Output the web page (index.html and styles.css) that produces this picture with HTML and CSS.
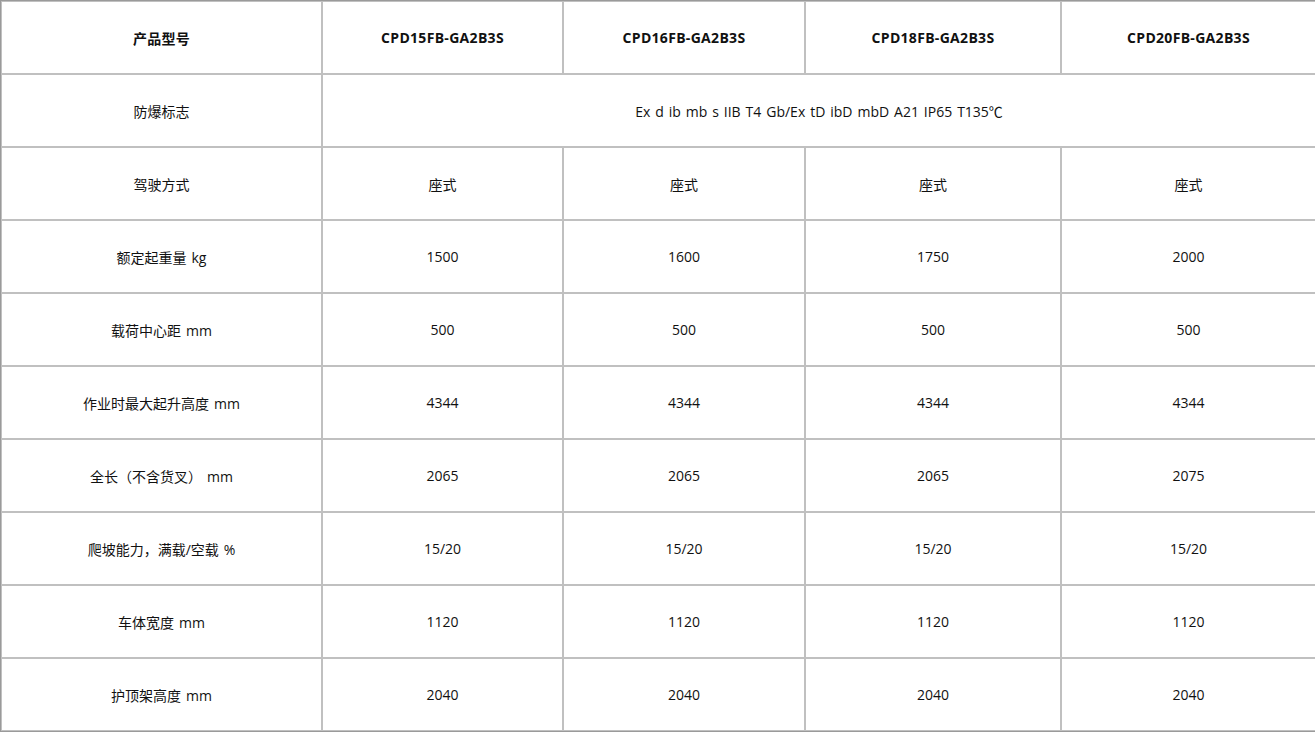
FILE: index.html
```html
<!DOCTYPE html>
<html lang="zh">
<head>
<meta charset="utf-8">
<link rel="stylesheet" href="styles.css">
</head>
<body>
<table class="spec">
  <colgroup>
    <col class="c1"><col class="c2"><col class="c3"><col class="c4"><col class="c5">
  </colgroup>
  <tr class="head">
    <td>产品型号</td><td>CPD15FB-GA2B3S</td><td>CPD16FB-GA2B3S</td><td>CPD18FB-GA2B3S</td><td>CPD20FB-GA2B3S</td>
  </tr>
  <tr>
    <td>防爆标志</td><td colspan="4">Ex d ib mb s IIB T4 Gb/Ex tD ibD mbD A21 IP65 T135℃</td>
  </tr>
  <tr>
    <td>驾驶方式</td><td>座式</td><td>座式</td><td>座式</td><td>座式</td>
  </tr>
  <tr>
    <td>额定起重量 kg</td><td>1500</td><td>1600</td><td>1750</td><td>2000</td>
  </tr>
  <tr>
    <td>载荷中心距 mm</td><td>500</td><td>500</td><td>500</td><td>500</td>
  </tr>
  <tr>
    <td>作业时最大起升高度 mm</td><td>4344</td><td>4344</td><td>4344</td><td>4344</td>
  </tr>
  <tr>
    <td>全长（不含货叉） mm</td><td>2065</td><td>2065</td><td>2065</td><td>2075</td>
  </tr>
  <tr>
    <td>爬坡能力，满载/空载 %</td><td>15/20</td><td>15/20</td><td>15/20</td><td>15/20</td>
  </tr>
  <tr>
    <td>车体宽度 mm</td><td>1120</td><td>1120</td><td>1120</td><td>1120</td>
  </tr>
  <tr>
    <td>护顶架高度 mm</td><td>2040</td><td>2040</td><td>2040</td><td>2040</td>
  </tr>
</table>
</body>
</html>
```
FILE: styles.css
```css
html, body {
  margin: 0;
  padding: 0;
  background: #fff;
}
.spec {
  width: 1315px;
  table-layout: fixed;
  border-collapse: separate;
  border-spacing: 0;
  border: 1px solid #9a9a9a;
  font-family: "Open Sans", "Noto Sans CJK SC", sans-serif;
  font-size: 14px;
  color: #111;
}
.c1 { width: 321px; }
.c2 { width: 241px; }
.c3 { width: 242px; }
.c4 { width: 256px; }
.c5 { width: 255px; }
.spec tr {
  height: 73px;
}
.spec td {
  border: 1px solid #c0c0c0;
  padding: 0 4px;
  text-align: center;
  vertical-align: middle;
  word-spacing: 1.3px;
}
.head td {
  font-weight: bold;
  letter-spacing: 0.3px;
}
```
